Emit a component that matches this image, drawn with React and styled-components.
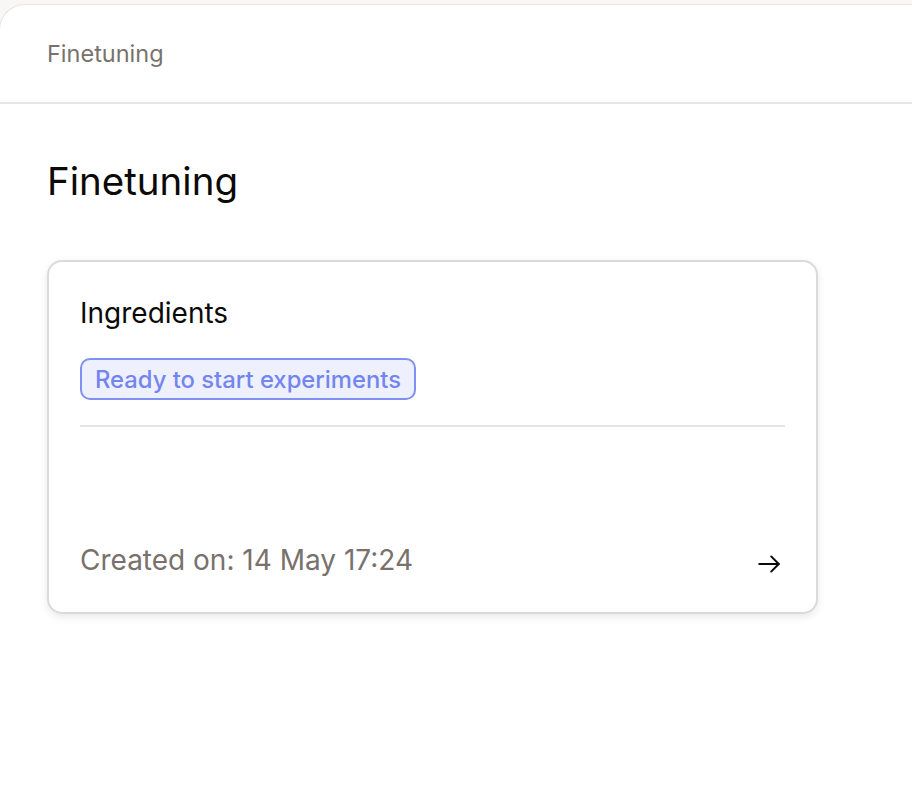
import styled, { createGlobalStyle } from "styled-components";

const GlobalStyle = createGlobalStyle`
  html, body {
    margin: 0;
    padding: 0;
    background: #f8f7f5;
    font-family: Inter, "Noto Sans", sans-serif;
    -webkit-font-smoothing: antialiased;
  }
`

const Page = styled.div`
  padding-top: 4px;
  min-height: 802px;
`

const Panel = styled.div`
  margin-left: -1px;
  min-height: 802px;
  background: #ffffff;
  border-top: 1px solid #e5e5e3;
  border-left: 1px solid #e5e5e3;
  border-top-left-radius: 26px;
`

const Header = styled.div`
  height: 97px;
  display: flex;
  align-items: center;
  padding-left: 47px;
  border-bottom: 2px solid #e7e6e4;
  color: #78716c;
  font-size: 23.5px;
`

const Content = styled.div`
  padding: 53px 47px;
`

const Title = styled.h1`
  margin: 0 0 55px 0;
  font-size: 38.5px;
  line-height: 48px;
  font-weight: 400;
  color: #0c0a09;
`

const Card = styled.div`
  width: 705px;
  height: 288px;
  padding: 31px;
  display: flex;
  flex-direction: column;
  background: #fff;
  border: 2px solid #dcdad8;
  border-radius: 15px;
  box-shadow: 0 3px 8px rgba(0, 0, 0, 0.09);
`

const CardTitle = styled.div`
  font-size: 28px;
  color: #0c0a09;
  line-height: 40px;
`

const Badge = styled.span`
  align-self: flex-start;
  margin-top: 25px;
  padding: 0 13px;
  height: 38px;
  display: inline-flex;
  align-items: center;
  font-size: 23.8px;
  font-weight: 500;
  color: #7386ef;
  background: #eef0fd;
  border: 2px solid #7f91f0;
  border-radius: 10px;
`

const Divider = styled.div`
  margin-top: 25px;
  height: 2px;
  background: #e6e5e3;
`

const Footer = styled.div`
  margin-top: auto;
  display: flex;
  align-items: center;
  justify-content: space-between;
  padding-bottom: 3px;
  line-height: 36px;
`

const Meta = styled.span`
  font-size: 28px;
  color: #78716c;
`

const Arrow = styled.svg`
  width: 26px;
  height: 26px;
  margin-right: 3px;
  margin-top: 8px;
`

function App() {
  return (
    <Page>
      <GlobalStyle />
      <Panel>
        <Header>Finetuning</Header>
        <Content>
          <Title>Finetuning</Title>
          <Card>
            <CardTitle>Ingredients</CardTitle>
            <Badge>Ready to start experiments</Badge>
            <Divider />
            <Footer>
              <Meta>Created on: 14 May 17:24</Meta>
              <Arrow viewBox="0 0 24 24" fill="none" stroke="#0c0a09" strokeWidth="1.8" strokeLinecap="round" strokeLinejoin="round">
                <path d="M3 12h18" />
                <path d="M14 5l7 7-7 7" />
              </Arrow>
            </Footer>
          </Card>
        </Content>
      </Panel>
    </Page>
  )
}

export default App
